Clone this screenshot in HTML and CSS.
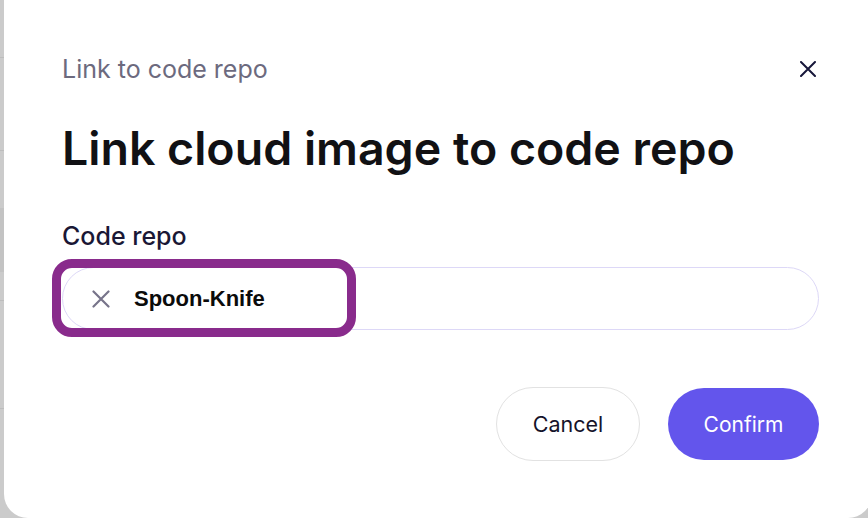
FILE: index.html
```html
<!DOCTYPE html>
<html lang="en">
<head>
  <meta charset="UTF-8">
  <meta name="viewport" content="width=device-width, initial-scale=1.0">
  <title>Link to code repo</title>
  <link rel="stylesheet" href="styles.css">
</head>
<body>
  <div class="backdrop">
    <div class="modal">
      <div class="modal-header">
        <span class="modal-kicker">Link to code repo</span>
        <button class="close-btn" aria-label="Close">
          <svg width="16" height="16" viewBox="0 0 16 16">
            <path d="M1 1 L15 15 M15 1 L1 15" stroke="#17173a" stroke-width="2" stroke-linecap="round"/>
          </svg>
        </button>
      </div>

      <h1 class="modal-title">Link cloud image to code repo</h1>

      <label class="field-label">Code repo</label>
      <div class="field">
        <div class="select-input">
          <button class="clear-btn" aria-label="Clear">
            <svg width="18" height="18" viewBox="0 0 18 18">
              <path d="M1.5 1.5 L16.5 16.5 M16.5 1.5 L1.5 16.5" stroke="#77748a" stroke-width="2.2" stroke-linecap="round"/>
            </svg>
          </button>
          <span class="selected">Spoon-Knife</span>
        </div>
        <div class="highlight"></div>
      </div>

      <div class="modal-actions">
        <button class="btn btn-cancel">Cancel</button>
        <button class="btn btn-confirm">Confirm</button>
      </div>
    </div>
  </div>
</body>
</html>
```

FILE: styles.css
```css
html, body {
  margin: 0;
  height: 100%;
  overflow: hidden;
}
body {
  font-family: Inter, "Noto Sans", sans-serif;
  background-color: #cbcbcb;
}
/* page behind the dialog, only a sliver of it shows on the left */
.backdrop {
  height: 518px;
  padding-left: 4px;
  display: flex;
  align-items: flex-end;
  background:
    linear-gradient(#bdbdbd, #bdbdbd) 0 57px / 4px 1px no-repeat,
    linear-gradient(#bdbdbd, #bdbdbd) 0 150px / 4px 1px no-repeat,
    linear-gradient(#c3c3c3, #c3c3c3) 0 208px / 4px 64px no-repeat,
    linear-gradient(#bdbdbd, #bdbdbd) 0 300px / 4px 1px no-repeat,
    linear-gradient(#bdbdbd, #bdbdbd) 0 408px / 4px 1px no-repeat,
    #cbcbcb;
}
.modal {
  flex: none;
  background-color: #fff;
  border-radius: 24px;
  height: 541px;
  width: 868px;
  box-sizing: border-box;
  padding: 75px 0 0 58px;
}
.modal-header {
  display: flex;
  justify-content: space-between;
  align-items: center;
  width: 754px;
  height: 34px;
}
.modal-kicker {
  font-size: 25px;
  color: #6c6a7e;
}
.close-btn {
  border: none;
  background: none;
  padding: 0;
  width: 16px;
  height: 16px;
  display: flex;
  cursor: pointer;
}
.modal-title {
  margin: 32px 0 0;
  font-size: 46.5px;
  font-weight: 600;
  color: #111114;
  line-height: 60px;
}
.field-label {
  display: block;
  margin-top: 43px;
  font-size: 25px;
  font-weight: 500;
  color: #1a1735;
  line-height: 30px;
}
.field {
  position: relative;
  margin-top: 16px;
  width: 757px;
}
.select-input {
  display: flex;
  align-items: center;
  height: 63px;
  box-sizing: border-box;
  border: 1px solid #ddd8f7;
  border-radius: 32px;
  padding-left: 29px;
}
.clear-btn {
  border: none;
  background: none;
  padding: 0;
  width: 18px;
  height: 18px;
  display: flex;
}
.selected {
  margin-left: 24px;
  font-family: "Liberation Sans", Arial, sans-serif;
  font-weight: bold;
  font-size: 22px;
  color: #0b0b0b;
}
.highlight {
  position: absolute;
  left: -10px;
  top: -8px;
  width: 304px;
  height: 78px;
  box-sizing: border-box;
  border: 9px solid #892b8c;
  border-radius: 20px;
  pointer-events: none;
}
.modal-actions {
  display: flex;
  justify-content: flex-end;
  align-items: center;
  gap: 28px;
  width: 757px;
  margin-top: 57px;
}
.btn {
  font-family: Inter, "Noto Sans", sans-serif;
  font-size: 21.5px;
  border-radius: 37px;
  cursor: pointer;
}
.btn-cancel {
  width: 144px;
  height: 74px;
  background-color: #fff;
  border: 1px solid #e2e2e2;
  color: #15132a;
}
.btn-confirm {
  width: 151px;
  height: 72px;
  background-color: #6355ec;
  border: none;
  color: #fff;
  font-size: 21px;
}
```
